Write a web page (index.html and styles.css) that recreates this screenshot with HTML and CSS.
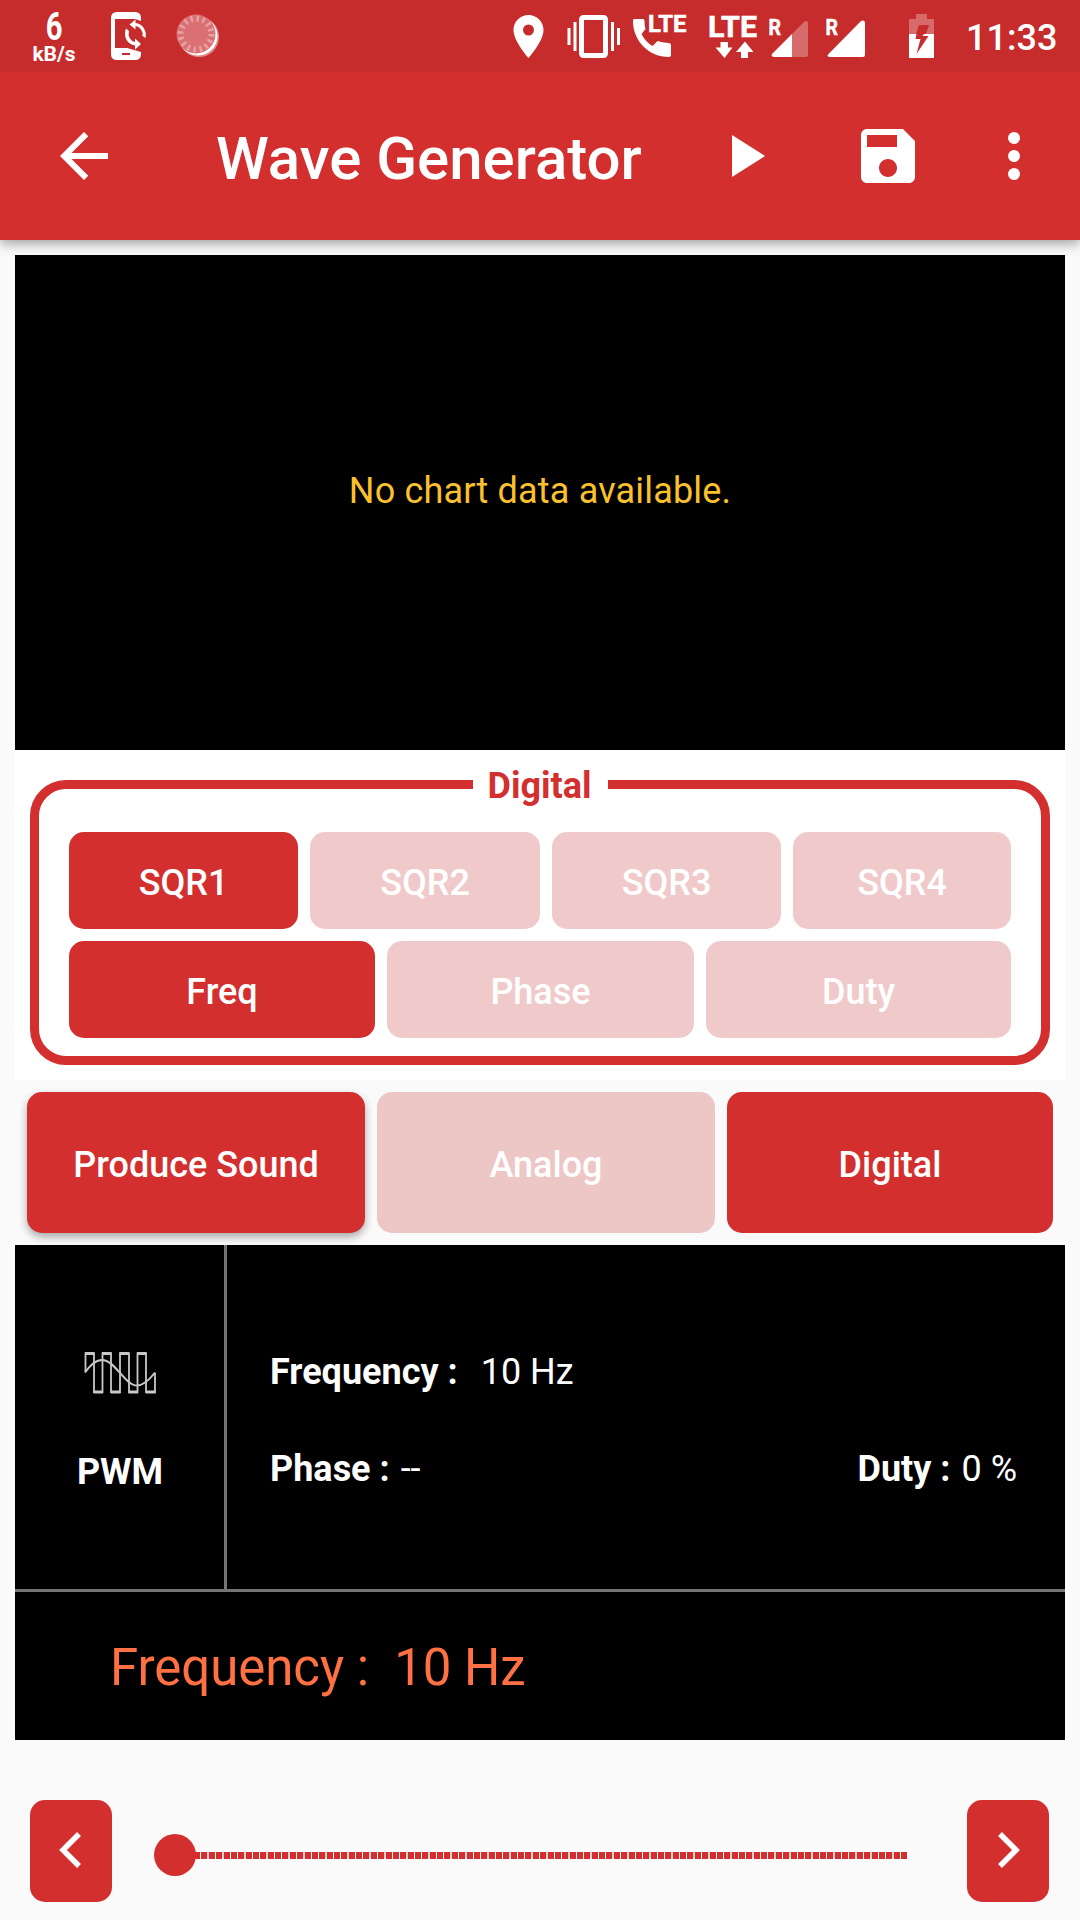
FILE: index.html
```html
<!DOCTYPE html>
<html lang="en">
<head>
<meta charset="utf-8">
<title>Wave Generator</title>
<link rel="stylesheet" href="styles.css">
</head>
<body>
<header class="status">
  <div class="speed"><span class="speed-value">6</span><span class="speed-unit">kB/s</span></div>
  <svg class="status-icons" viewBox="100 0 845 72" width="845" height="72">
    <g fill="#fff">
      <path fill-rule="evenodd" d="M117 12h18q6 0 6 6v3l-6-2h-20v29h12l14 4v2q0 6-6 6h-18q-6 0-6-6v-36q0-6 6-6zM122 53v2h8v-2z"/>
      <path d="M129.500 24.500l6-5v3.500a11 12 0 0 1 10 15l-3-2a8 8.500 0 0 0-7-10v3.500zM141 44l-6 5.500v-4a11.500 12 0 0 1-9-17l3 2.500a8 8.500 0 0 0 6 11v-3.500z"/>
      <circle cx="199" cy="37" r="20" opacity=".45"/>
      <circle cx="198" cy="36" r="19.500"/>
      <circle cx="196" cy="34" r="19.500" fill="#da7073"/>
      <circle cx="196" cy="34" r="15.500" fill="none" stroke="#e5a1a3" stroke-width="6" stroke-dasharray="2.500 3.587"/>
      <path fill-rule="evenodd" d="M528.500 15c-8.300 0-15 6.700-15 15 0 11.300 15 28 15 28s15-16.700 15-28c0-8.300-6.700-15-15-15zm0 20.500a5.500 5.500 0 1 1 0-11 5.500 5.500 0 0 1 0 11z"/>
      <path fill-rule="evenodd" d="M584 15h19q5 0 5 5v33q0 5-5 5h-19q-5 0-5-5v-33q0-5 5-5zm0 5v33h19v-33z"/>
      <path d="M567.500 28h3v17h-3zM573.500 22h3v29h-3zM611 22h3v29h-3zM617 28h3v17h-3z"/>
      <path d="M634 19h9q1.500 0 1.500 2 0 5 1 8l-4 5q4 8 11 12l5-5q4 1.500 11 2 2.500 0 2.500 2v10q0 2-2 2c-20 0-36-16-36-36q0-2 1-2z"/>
      <path d="M720.500 42h7.500v5.500h4.500l-8 10.500-9-10.500h5zM741 58v-6h-5l9-10.500 8.500 10.500h-5.500v6z"/>
      <path d="M792 34v23h-18q-4-1-1.500-3.500z"/>
      <path opacity=".3" d="M792 34l12.500-12.500q3-1.500 3.500 1v32q0 2.500-2 2.500h-14z"/>
      <path d="M828.500 54l32-32.500q3.500-2.500 4.500 1v32q0 2.500-2 2.500h-33q-4-.5-1.500-3z"/>
      <path opacity=".3" d="M916 14h11v5h7v15h-8l3-9h-10l-3 9h-7v-15h7z"/>
      <path d="M909 34h7.500l-1 5h5l-4 15 12-18h-6l1.500-2h10v24h-25z"/>
    </g>
    <g class="glyph-text" fill="#fff" stroke="#fff">
      <text x="648" y="32" font-size="23" textLength="38.500" lengthAdjust="spacingAndGlyphs">LTE</text>
      <text x="708" y="37" font-size="29" textLength="49" lengthAdjust="spacingAndGlyphs">LTE</text>
      <text x="768.500" y="35" font-size="22" textLength="12.500" lengthAdjust="spacingAndGlyphs">R</text>
      <text x="825.500" y="35" font-size="22" textLength="12.500" lengthAdjust="spacingAndGlyphs">R</text>
    </g>
  </svg>
  <time class="clock">11:33</time>
</header>
<nav class="appbar">
  <svg class="back" viewBox="4 4 16 16" width="48" height="48"><path fill="#fff" d="M20 11H7.830l5.590-5.590L12 4l-8 8 8 8 1.410-1.410L7.830 13H20z"/></svg>
  <h1 class="title">Wave Generator</h1>
  <svg class="play" viewBox="8 5 11 14" width="33" height="42"><path fill="#fff" d="M8 5v14l11-7z"/></svg>
  <svg class="save" viewBox="3 3 18 18" width="54" height="54"><path fill="#fff" fill-rule="evenodd" d="M17 3H5c-1.110 0-2 .9-2 2v14c0 1.100.89 2 2 2h14c1.100 0 2-.9 2-2V7zm-5 16c-1.660 0-3-1.340-3-3s1.340-3 3-3 3 1.340 3 3-1.340 3-3 3zm3-10H5V5h10z"/></svg>
  <svg class="more" viewBox="0 0 12 48" width="12" height="48"><g fill="#fff"><circle cx="6" cy="6" r="6"/><circle cx="6" cy="24" r="6"/><circle cx="6" cy="42" r="6"/></g></svg>
</nav>
<main class="content">
  <section class="chart">No chart data available.</section>
  <section class="panel">
    <fieldset class="group">
      <legend>Digital</legend>
      <div class="row waves"><button class="btn on">SQR1</button><button class="btn off">SQR2</button><button class="btn off">SQR3</button><button class="btn off">SQR4</button></div>
      <div class="row props"><button class="btn on">Freq</button><button class="btn off">Phase</button><button class="btn off">Duty</button></div>
    </fieldset>
  </section>
  <div class="row modes"><button class="btn on raised">Produce Sound</button><button class="btn off">Analog</button><button class="btn on">Digital</button></div>
  <section class="info">
    <div class="summary">
      <div class="kind">
        <svg viewBox="0 0 72 42" width="72" height="42" fill="none" stroke="#c8c8c8"><path stroke-width="1.800" d="M1.500 20V1.500H10V40H18.500V1.500H27V40H36V1.500H45V40H53.500V1.500H62V40H71V21"/><path stroke-width="2" d="M1 20.500C6 14 11 8 18 8 31 8 41 33.500 53 33.500 60 33.500 66 27 71 20.500"/><path stroke-width="2.800" d="M1 1.500h9.500M18 1.500h9.500M35.500 1.500h9.500M53 1.500h9.500M9.500 40h9.500M27 40h9.500M44.500 40h9.500M62 40h9.500"/></svg>
        <b>PWM</b>
      </div>
      <div class="details">
        <p class="line"><span><b>Frequency :</b><span class="wide">10 Hz</span></span></p>
        <p class="line"><span><b>Phase :</b><span class="value">--</span></span><span><b>Duty :</b><span class="value">0 %</span></span></p>
      </div>
    </div>
    <p class="current">Frequency :&nbsp; 10 Hz</p>
  </section>
  <div class="seek">
    <button class="step"><svg viewBox="0 0 22 36" width="22" height="36"><path d="M20 2L4 18l16 16" fill="none" stroke="#fff" stroke-width="5.500"/></svg></button>
    <svg class="track" viewBox="0 0 753 42" width="753" height="42">
      <path d="M18 21H750" stroke="#d0d0d0" stroke-width="6" stroke-dasharray="0 13 2 20 2 13 2 20 2 7"/>
      <path d="M18 21.500H753" stroke="#d32f2f" stroke-width="7" stroke-dasharray="6 1 6 2 6 1 6 1 6 2 6 1 6 2 6 1 6 1 6 2 6 1"/>
      <circle cx="21" cy="21" r="21" fill="#d32f2f"/>
    </svg>
    <button class="step"><svg viewBox="0 0 22 36" width="22" height="36"><path d="M2 2l16 16L2 34" fill="none" stroke="#fff" stroke-width="5.500"/></svg></button>
  </div>
</main>
</body>
</html>
```
FILE: styles.css
```css
* { box-sizing: border-box; }
body { margin: 0; width: 1080px; height: 1920px; overflow: hidden; background: #fafafa; font-family: Roboto, sans-serif; color: #fff; }
h1, p { margin: 0; }
svg { display: block; flex: none; }
button { border: 0; padding: 0; font: inherit; color: inherit; }
b { font-weight: 700; }

.status { position: relative; z-index: 1; display: flex; height: 72px; background: #c62c2c; }
.speed { width: 100px; padding: 11px 0 0 8px; display: flex; flex-direction: column; align-items: center; font-weight: 700; }
.speed-value { font-size: 39px; line-height: 33px; transform: scaleX(.75); }
.speed-unit { font-size: 21px; line-height: 20px; font-weight: 700; }
.glyph-text { font-weight: 700; stroke-width: .5; }
.clock { padding-left: 21px; font-size: 36px; line-height: 76px; font-weight: 500; white-space: nowrap; }

.appbar { display: flex; align-items: center; height: 168px; padding: 0 60px; background: #d32f2f; box-shadow: 0 3px 12px rgba(0, 0, 0, .4); }
.title { width: 516px; margin-left: 108px; font-size: 60px; line-height: 70px; font-weight: 500; padding-top: 6px; white-space: nowrap; }
.save { margin-left: 96px; }
.more { margin-left: 93px; }

.content { padding: 15px 15px 0; }
.chart { display: flex; align-items: center; justify-content: center; height: 495px; padding-bottom: 23px; background: #000; color: #fbc02d; font-size: 36px; letter-spacing: .18px; }
.panel { height: 330px; padding: 14px 15px 15px; background: #fff; }
.group { height: 301px; margin: 0; padding: 27px 30px 0; border: 9px solid #d32f2f; border-radius: 36px; min-width: 0; }
.group legend { height: 41px; margin: 0 auto; padding: 2px 16px 0 15px; color: #d32f2f; font-size: 36px; line-height: 41px; font-weight: 700; }
.row { display: grid; gap: 12px; }
.waves { grid-template-columns: 229px 230px 229px 218px; height: 97px; }
.props { grid-template-columns: 306px 307px 305px; height: 97px; margin-top: 12px; }
.modes { grid-template-columns: 338px 338px 326px; height: 165px; padding: 12px; }
.btn { border-radius: 15px; font-size: 36px; font-weight: 500; padding-top: 4px; }
.on { background: #d32f2f; }
.off { background: #f0caca; }
.modes .off { background: #edc6c6; }
.raised { box-shadow: 0 4px 9px rgba(0, 0, 0, .33); }

.info { height: 495px; background: #000; font-size: 36px; }
.summary { display: flex; height: 347px; border-bottom: 3px solid #757575; }
.kind { width: 212px; border-right: 3px solid #757575; padding: 107px 0 0 1px; display: flex; flex-direction: column; align-items: center; gap: 57px; }
.details { flex: 1; padding: 106px 48px 0 43px; }
.line { display: flex; justify-content: space-between; line-height: 42px; margin-bottom: 55px; }
.wide { margin-left: 23px; }
.value { margin-left: 11px; }
.current { padding: 46px 0 0 95px; color: #ff7043; font-size: 51px; line-height: 60px; letter-spacing: -.05px; }

.seek { display: flex; align-items: center; margin: 60px 1px 0 15px; height: 102px; }
.step { display: flex; align-items: center; justify-content: center; width: 82px; height: 102px; border-radius: 15px; background: #d32f2f; padding-bottom: 2px; }
.step:first-child { padding-right: 2px; }
.step:last-child { padding-left: 2px; }
.track { margin: 8px 60px 0 42px; }
```
